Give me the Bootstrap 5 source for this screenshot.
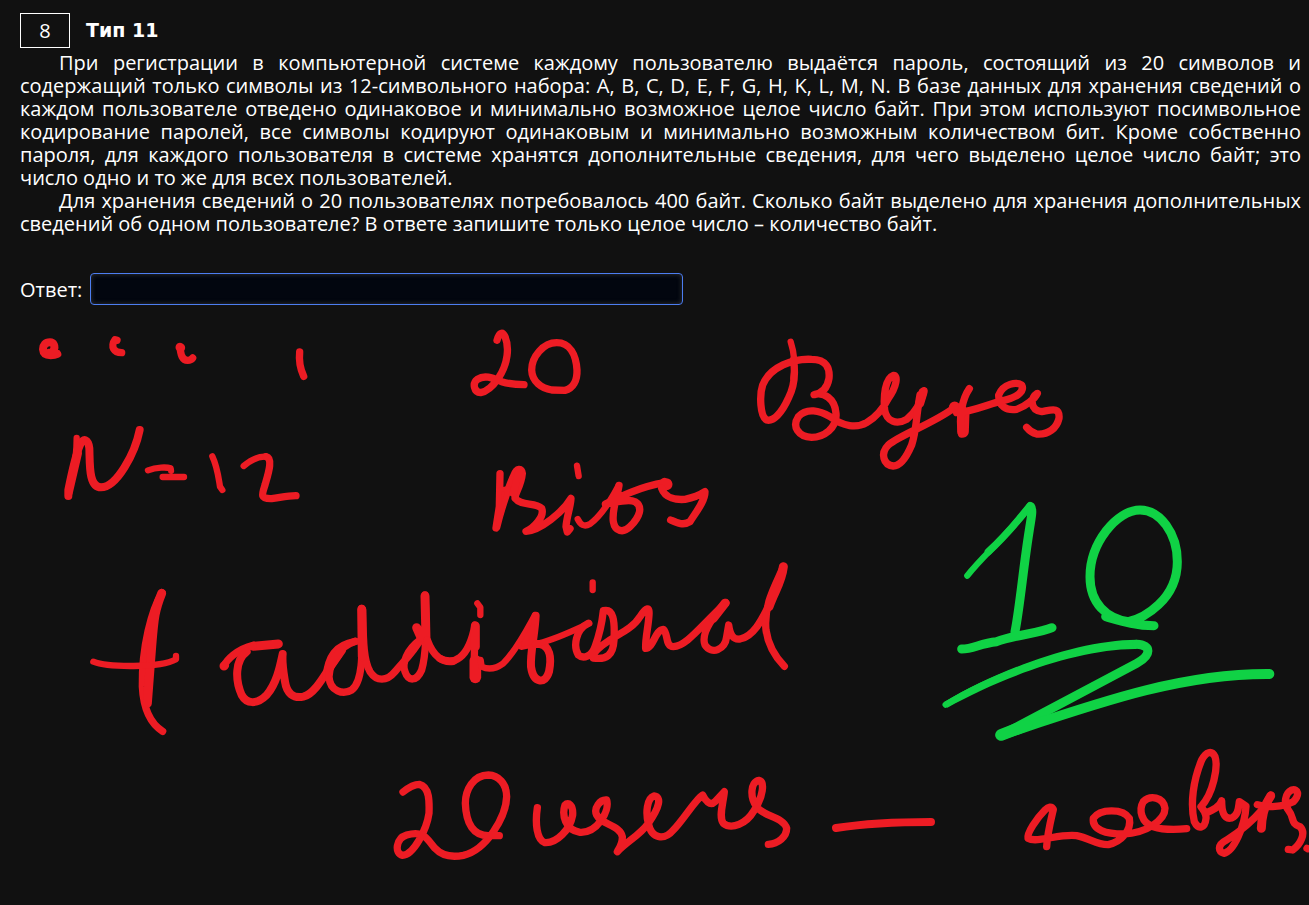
<!DOCTYPE html>
<html lang="ru">
<head>
<meta charset="utf-8">
<meta name="viewport" content="width=device-width, initial-scale=1">
<title>Задание 8 — Тип 11</title>
<link href="https://cdn.jsdelivr.net/npm/bootstrap@5.3.0/dist/css/bootstrap.min.css" rel="stylesheet">
<style>
  body { background: #111; color: #fff; font-family: "Open Sans", Verdana, sans-serif; font-size: 20px; line-height: 23px; }
  .task { padding: 13px 8px 5px 20px; }
  .task-number { width: 50px; height: 35px; border: 1px solid #fff; }
  .task-type { font-family: "DejaVu Sans", Verdana, sans-serif; font-size: 19px; line-height: 23px; }
  .task-text { margin-top: 3px; text-align: justify; }
  .task-text p { text-indent: 39px; }
  .answer { margin-top: 38px; }
  .answer-input, .answer-input:focus { width: 593px; height: 32px; background: #02060f; border: 1px solid #4c7df0; border-radius: 4px; color: #fff; box-shadow: inset 0 0 5px #333; }
  .ink { fill: none; stroke: #ed1c24; stroke-width: 22; stroke-linecap: round; stroke-linejoin: round; }
  .ink .bold-pen { stroke-width: 24; }
  .ink .green { stroke: #10d245; }
  .ink .thin { stroke-width: 19; }
  .ink .wide { stroke-width: 27; }
  .ink .fat { stroke-width: 35; }
  .ink .fill-red { fill: #ed1c24; }
</style>
</head>
<body class="min-vh-100 overflow-x-hidden">
<main>
  <section class="task">
    <header class="d-flex align-items-center gap-3">
      <span class="task-number d-flex align-items-center justify-content-center flex-shrink-0">8</span>
      <h1 class="task-type fw-bold mb-0">Тип 11</h1>
    </header>
    <div class="task-text">
      <p class="mb-0">При регистрации в компьютерной системе каждому пользователю выдаётся пароль, состоящий из 20 символов и содержащий только символы из 12-символьного набора: A, B, C, D, E, F, G, H, K, L, M, N. В базе данных для хранения сведений о каждом пользователе отведено одинаковое и минимально возможное целое число байт. При этом используют посимвольное кодирование паролей, все символы кодируют одинаковым и минимально возможным количеством бит. Кроме собственно пароля, для каждого пользователя в системе хранятся дополнительные сведения, для чего выделено целое число байт; это число одно и то же для всех пользователей.</p>
      <p class="mb-0">Для хранения сведений о 20 пользователях потребовалось 400 байт. Сколько байт выделено для хранения дополнительных сведений об одном пользователе? В ответе запишите только целое число – количество байт.</p>
    </div>
    <form class="answer d-flex align-items-center gap-2">
      <label for="answer">Ответ:</label>
      <input id="answer" type="text" class="answer-input form-control py-0" autocomplete="off">
    </form>
  </section>

  <svg class="ink d-block w-100" viewBox="0 0 3927 1770" role="img" aria-label="Рукописные пометки к решению">
    <!-- four small marks and N = 12 -->
    <g transform="translate(60 30)">
      <path class="bold-pen" d="M100 92C108 78 100 67 90 67C76 67 69 76 69 88C70 102 78 106 92 106C104 106 108 104 112 102M88 98L100 96"/>
      <path d="M291 61L285 59C278 68 277 80 281 87C286 96 294 98 305 98"/>
      <path d="M481 82C481 105 488 121 503 121C512 121 515 118 518 114"/>
      <path class="wide" d="M480 82L482 83"/>
      <path d="M839 96C837 115 840 145 851 169"/>
      <path class="thin" d="M170 354C170 400 165 430 158 455L145 520"/>
      <path class="bold-pen" d="M145 528V510C155 460 165 410 180 375C190 350 205 360 208 385C210 430 205 502 243 502C290 502 345 400 359 330"/>
      <path class="fill-red" d="M145 520L172 375L178 400L150 520Z" stroke-width="16"/>
      <path class="thin" d="M384 451C410 441 440 441 452 445L453 452M428 471H492M577 409C592 440 595 470 600 500L607 510"/>
      <path class="thin" d="M671 438C695 418 715 408 738 410"/>
      <path d="M738 410C760 415 745 460 735 495C725 525 720 537 755 536C780 533 800 527 828 527"/>
    </g>
    <!-- 20, bits -->
    <g transform="translate(1380 30)">
      <path d="M111 61C118 35 128 35 135 50C148 80 145 130 115 175C100 197 80 215 62 218C42 217 36 190 52 178C75 163 100 175 125 185C150 193 170 194 192 194"/>
      <path d="M290 68C250 68 215 110 215 150C216 185 245 205 275 210L315 211C340 205 352 180 351 150C348 105 330 68 290 68"/>
      <path d="M120 461L118 560L108 624M110 622C125 560 150 490 160 470C170 440 186 445 187 460C184 495 165 520 165 535C185 560 225 545 245 565C255 590 220 625 198 634C240 632 310 575 333 535C332 560 320 590 318 620L322 636L330 626"/>
      <path class="fill-red" stroke-width="14" d="M118 510L145 505L115 610Z"/>
      <path d="M178 450L160 520"/>
      <path class="thin" d="M351 437L356 468"/>
      <path class="thin" d="M353 597C362 615 372 622 390 612C420 590 445 555 475 498"/>
      <path d="M477 496C470 540 455 570 460 605C465 635 490 640 510 620C540 590 550 560 525 545C505 535 465 548 436 552C480 530 540 500 614 488"/>
      <path class="fat" d="M614 491L620 493"/>
      <path d="M605 505C615 535 650 540 675 538C700 533 720 525 735 515C735 545 705 580 690 605C670 618 650 608 632 600"/>
    </g>
    <!-- bytes -->
    <g transform="translate(2220 30)">
      <path class="thin" d="M152 65C165 105 165 145 160 175"/>
      <path d="M160 120C168 165 160 205 145 235C125 280 100 305 80 300C60 290 58 225 68 195C90 140 160 115 215 118C260 118 270 145 267 175C262 205 245 220 222 224C250 215 285 235 288 280C292 325 250 352 215 352C175 350 155 320 175 290C200 262 240 272 270 290C310 320 350 325 380 308C410 290 430 265 445 235C470 200 475 165 460 166C435 175 430 230 434 270C440 305 470 315 500 298C530 275 545 240 552 212"/>
      <path class="wide" d="M549 217L539 250"/>
      <path d="M540 225C528 290 530 330 515 375C500 410 480 438 460 438C430 435 420 400 445 375C480 345 580 310 640 265"/>
      <path class="fat" d="M644 262V264M669 335L671 280"/>
      <path d="M688 206C668 235 655 290 665 342M650 278C700 275 750 250 790 242C830 232 855 215 845 195C830 185 790 190 776 225C775 260 800 272 830 268C860 258 885 235 892 220C870 235 870 270 905 275C935 270 960 260 957 295C950 325 925 345 890 342C875 338 865 328 860 322"/>
    </g>
    <!-- plus sign and "add" -->
    <g transform="translate(240 750)">
      <path d="M246 98C215 150 185 260 187 380C190 440 210 490 248 514"/>
      <path class="wide" d="M245 100C225 150 222 170 215 260L202 430"/>
      <path class="thin" d="M40 305C80 322 240 325 288 298V288"/>
      <path class="wide" d="M432 318L434 316M520 259L595 252"/>
      <path d="M432 318C440 300 470 268 520 256"/>
      <path class="bold-pen" d="M500 275C465 300 465 360 485 405C500 432 530 435 560 405C590 370 600 320 608 282C605 310 612 345 615 365C620 400 640 416 670 410C710 400 740 330 775 285"/>
      <path d="M738 350C745 290 765 255 826 244"/>
      <path d="M826 244C780 260 750 300 747 350C750 395 790 405 815 390C855 360 845 250 845 145"/>
      <path d="M848 150C850 240 850 300 870 335C890 365 920 365 945 335C975 300 1005 270 1020 240C980 270 965 310 975 335C985 365 1010 365 1025 330C1040 280 1040 200 1035 105"/>
      <path class="wide" d="M845 148L847 290M1010 203L1022 230M1035 108L1038 240M750 320L785 270"/>
      <path d="M1042 240C1060 290 1090 310 1120 304"/>
    </g>
    <!-- "itional" -->
    <g transform="translate(1320 690)">
      <path d="M0 356C40 375 85 360 105 255L103 350"/>
      <path class="wide" d="M106 258V320"/>
      <path class="fat" d="M106 362V412"/>
      <path class="thin" d="M112 190L121 202V225M458 127V150"/>
      <path class="thin" d="M122 360L125 380C145 390 165 388 190 370C230 330 260 270 285 225"/>
      <path class="bold-pen" d="M287 227C285 280 270 340 273 380C280 430 315 435 327 395C336 350 328 318 300 312C280 310 255 315 245 318"/>
      <path class="fill-red" stroke-width="14" d="M250 312L278 260L275 305Z"/>
      <path class="thin" d="M285 312C340 302 390 275 448 250"/>
      <path d="M445 250C405 270 400 320 415 345C430 358 455 350 465 320C480 280 487 240 490 212C520 205 525 240 522 300C520 345 500 360 460 354M462 340C500 290 570 280 600 230C620 200 629 200 627 225C625 260 615 300 617 325C640 325 645 270 670 268C685 280 675 320 700 320C740 318 780 260 858 188C800 250 785 290 795 315C815 345 855 330 860 290L866 255C870 285 880 300 900 297C940 290 965 240 985 200"/>
      <path d="M1030 80C1010 130 970 190 978 270C985 320 1010 355 1033 379"/>
      <path class="wide" d="M1030 80C1025 125 1005 150 987 200M855 190L820 235"/>
    </g>
    <!-- green answer: 10, underlined -->
    <g class="green" transform="translate(2790 510)">
      <path class="thin" d="M112 287C160 225 230 170 300 77"/>
      <path d="M175 215C230 165 270 115 300 77"/>
      <path class="wide" d="M302 80C310 90 302 120 298 150C280 260 270 380 255 455"/>
      <path class="wide" d="M95 507C130 507 150 490 200 485C250 465 330 460 366 443"/>
      <path class="wide" d="M595 425C640 415 742 360 742 245C742 160 690 90 630 90C560 90 480 190 480 290C480 370 530 415 595 425M527 410C580 425 620 437 672 437"/>
      <path class="thin" d="M47 674C200 580 450 495 620 493"/>
      <path fill="#10d245" stroke="none" d="M43 666C200 572 440 480 620 479V507C440 505 200 600 52 683Z"/>
      <path class="wide" d="M620 493C665 495 665 525 620 550L215 765"/>
      <path stroke-width="30" d="M215 765C500 670 750 580 1018 582"/>
      <path class="fat" d="M213 765L290 735"/>
    </g>
    <!-- 20 users -->
    <g transform="translate(1140 1290)">
      <path d="M69 156C85 143 100 133 118 133C150 140 148 190 147 220C140 270 100 345 68 346C42 340 48 295 80 285C130 270 140 295 165 325C190 352 220 352 250 346C320 330 378 230 380 170C380 130 355 106 325 105C280 105 256 150 256 190C258 250 280 290 330 287H358"/>
      <path d="M472 203C465 250 470 300 495 308C530 310 570 270 578 225C580 195 565 185 555 195C545 225 555 270 600 277C650 280 690 215 680 180C660 178 640 205 650 225C665 255 720 255 727 290C728 310 720 320 712 335C740 305 780 285 805 250C840 200 845 170 822 168C800 175 797 220 805 250C815 300 855 300 880 270C910 240 945 180 968 165C975 180 990 200 1005 185L1033 155C1030 190 1015 230 1030 250C1055 270 1100 250 1120 215C1150 170 1155 125 1137 121C1110 125 1110 175 1130 200C1150 230 1210 230 1220 265C1220 290 1195 312 1165 313"/>
    </g>
    <path class="bold-pen" d="M2508 1554C2600 1540 2700 1536 2793 1536"/>
    <!-- 400 bytes -->
    <g transform="translate(3000 1260)">
      <path d="M140 350C142 310 155 260 160 238C155 228 145 230 135 240C110 265 80 310 84 325C110 340 180 310 230 317C270 325 290 345 325 344C365 335 395 300 388 265C370 235 300 235 280 265C275 300 320 312 370 312C440 310 495 270 495 235C490 200 450 195 430 215C415 240 425 280 460 290C490 300 520 300 560 296"/>
      <path d="M603 230C640 190 655 110 645 80C635 60 618 65 605 90C580 150 570 220 583 275C595 300 615 295 618 265C620 245 605 235 603 230M615 250C640 240 660 230 665 212C665 240 670 270 695 264C715 255 715 235 718 215L738 228C735 290 700 365 672 370C655 365 650 345 680 330C720 305 760 270 790 235L813 195"/>
      <path class="wide" d="M812 198C790 230 785 260 784 295"/>
      <path d="M772 224C800 235 850 230 880 215C900 195 895 175 875 180C855 190 850 220 865 240C885 265 870 280 900 290C920 310 900 345 878 360L865 358M921 355L923 356"/>
    </g>
  </svg>
</main>
<script src="https://cdn.jsdelivr.net/npm/bootstrap@5.3.0/dist/js/bootstrap.bundle.min.js"></script>
</body>
</html>
